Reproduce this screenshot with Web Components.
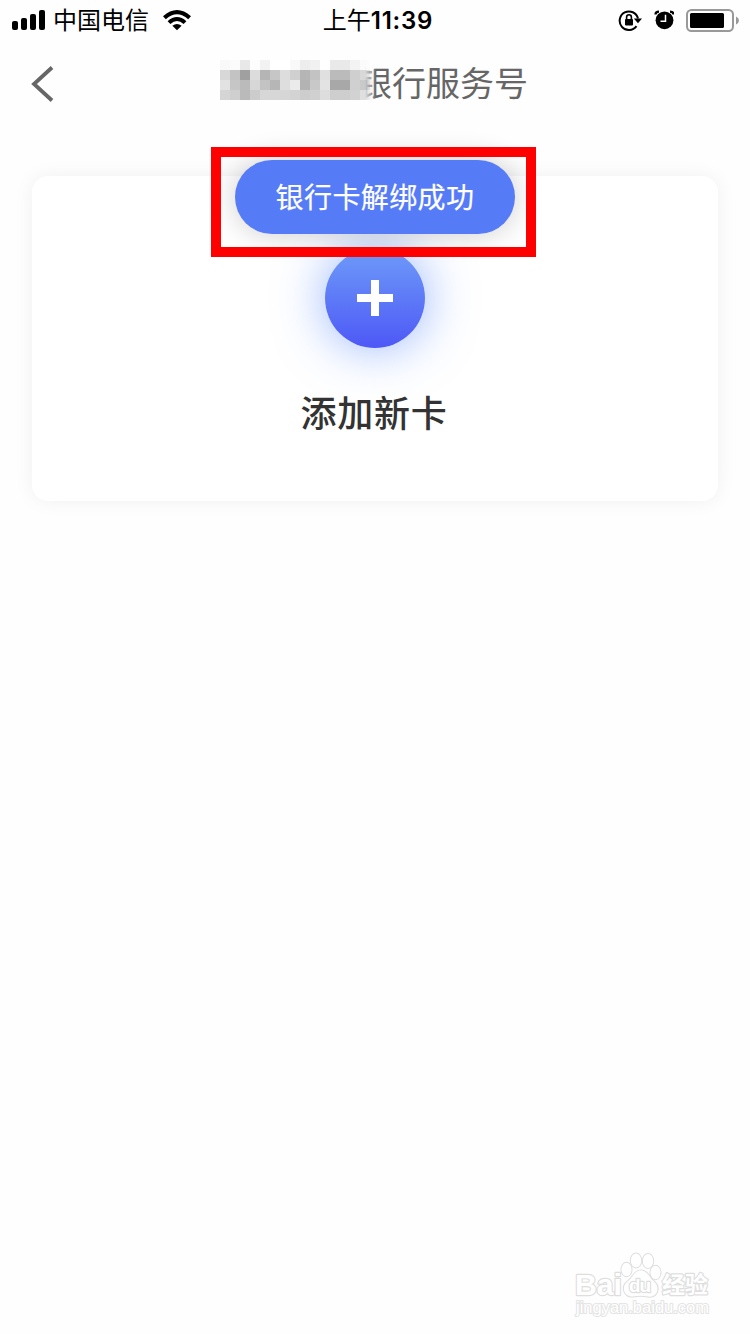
<!DOCTYPE html>
<html lang="zh-CN">
<head>
<meta charset="utf-8">
<title>银行服务号</title>
<style>
  html, body {
    margin: 0;
    height: 100%;
    overflow: hidden;
    background: #fefefe;
    font-family: "Liberation Sans", "Noto Sans CJK SC", sans-serif;
  }
</style>
</head>
<body>
<bank-page></bank-page>

<script>
function define(name, html, setup) {
  const template = document.createElement('template')
  template.innerHTML = html

  window.customElements.define(name, class extends HTMLElement {
    constructor() {
      super()
      const root = this.attachShadow({ mode: 'open' })
      root.appendChild(template.content.cloneNode(true))
      if (setup) setup(root)
    }
  })
}

define('status-bar', `
  <style>
    :host {
      display: grid;
      grid-template-columns: 1fr auto 1fr;
      grid-template-rows: 40px;
      align-items: center;
      height: 40px;
      padding: 0 11px 0 12px;
      color: #000;
      font: 24px/38px "Noto Sans CJK SC", sans-serif;
    }

    .left, .right, .time {
      display: flex;
      align-items: center;
    }

    .right {
      justify-content: flex-end;
    }

    .carrier {
      margin: 0 14px 0 7px;
      padding-bottom: 2px;
    }

    .time {
      margin-left: 5px;
    }

    .am {
      padding-bottom: 2px;
    }

    .digits {
      padding-top: 2px;
      font: 600 24px/38px Inter, sans-serif;
      letter-spacing: 0.8px;
    }

    svg {
      display: block;
      flex: none;
    }

    .lock { margin-right: 12px; }
    .alarm { margin-right: 11px; }
    .battery { margin-right: -11px; }
  </style>

  <div class="left">
    <svg width="34" height="40" viewBox="0 0 34 40">
      <rect x="0" y="21" width="6" height="9" rx="2"/>
      <rect x="9" y="18" width="6" height="12" rx="2"/>
      <rect x="18" y="14" width="6" height="16" rx="2"/>
      <rect x="27" y="10" width="6" height="20" rx="2"/>
    </svg>
    <span class="carrier">中国电信</span>
    <svg width="28" height="40" viewBox="163 0 28 40">
      <path d="M163 16.300Q177 3.700 191 16.300L188.200 19.200Q177 9.200 165.800 19.200Z"/>
      <path d="M167.600 21.200Q177 13 186.400 21.200L183.600 24Q177 18.200 170.400 24Z"/>
      <path d="M172.400 25.800Q177 22 181.600 25.800L177 30.300Z"/>
    </svg>
  </div>
  <div class="time"><span class="am">上午</span><span class="digits">11:39</span></div>
  <div class="right">
    <svg class="lock" width="24" height="40" viewBox="618 0 24 40">
      <path d="M636.500 26.200A9.300 9.300 0 1 1 638 18.500" fill="none" stroke="#000" stroke-width="2"/>
      <path d="M633.800 18.500H642L638 23.300Z"/>
      <rect x="625" y="19" width="8" height="6.500" rx="1"/>
      <path d="M626.600 20V17.200a2.400 2.400 0 0 1 4.800 0V20" fill="none" stroke="#000" stroke-width="1.600"/>
    </svg>
    <svg class="alarm" width="20" height="40" viewBox="654 0 20 40">
      <circle cx="664.500" cy="20.300" r="8.900"/>
      <path d="M655.500 14.500Q655.500 11.700 659 11.700M673.500 14.500Q673.500 11.700 670 11.700" fill="none" stroke="#000" stroke-width="2.300"/>
      <path d="M665.500 14.800V21.200H660.500" fill="none" stroke="#fff" stroke-width="1.500"/>
    </svg>
    <svg class="battery" width="65" height="40" viewBox="685 0 65 40">
      <rect x="687" y="10" width="46" height="21" rx="4.500" fill="none" stroke="#999" stroke-width="2"/>
      <rect x="690" y="13" width="34" height="15" rx="1.500"/>
      <path d="M736 16.500Q739 18 739 20.500T736 24.500Z" fill="#999"/>
    </svg>
  </div>
`)

// rows of grey levels behind which the bank's name is hidden
const MOSAIC = [
  'f9 fb e8 fd f2 ff ff f9 ed f1 ff e9 e9 f3 fb fe',
  'd8 c3 a0 dc b5 c6 dd d0 b5 c3 e0 bb bb cf d8 ee',
  'e2 c6 bb d7 c3 b6 de eb b3 c8 e3 a8 a8 d0 c9 e4',
  'd5 cf ba cc d7 d7 d6 d3 cd d0 dd ce ce d2 df ee'
]

define('pixel-mask', `
  <style>
    :host {
      display: grid;
      grid-template-columns: repeat(16, 10px);
      grid-auto-rows: 10px;
      -webkit-mask-image: linear-gradient(90deg, #000 145px, transparent 156px);
      mask-image: linear-gradient(90deg, #000 145px, transparent 156px);
    }
  </style>
`, (root) => {
  MOSAIC.join(' ').split(' ').forEach((level) => {
    const cell = document.createElement('i')
    cell.style.background = `#${level}${level}${level}`
    root.appendChild(cell)
  })
})

define('nav-bar', `
  <style>
    :host {
      display: grid;
      grid-template-columns: 220px 1fr;
      align-items: center;
      height: 88px;
      color: #666;
    }

    .back {
      display: block;
      margin-left: 30px;
    }

    .title {
      display: flex;
      align-items: center;
      height: 48px;
      margin-top: -4px;
      font: 34px/48px "Noto Sans CJK SC", sans-serif;
    }

    pixel-mask {
      margin: -4px -22px 0 0;
      z-index: 1;
    }
  </style>

  <svg class="back" width="26" height="40" viewBox="0 0 26 40">
    <path d="M22 3.500L4 20L22 36.500" fill="none" stroke="#666" stroke-width="3.800"/>
  </svg>
  <div class="title"><pixel-mask></pixel-mask><slot></slot></div>
`)

define('add-card', `
  <style>
    :host {
      display: flex;
      flex-direction: column;
      align-items: center;
      box-sizing: border-box;
      height: 325px;
      margin: 48px 32px 0;
      padding-top: 72px;
      border-radius: 16px;
      background: #fff;
      box-shadow: 0 0 20px rgba(0, 0, 0, 0.06);
    }

    .plus {
      display: grid;
      place-items: center;
      width: 100px;
      height: 100px;
      border-radius: 50%;
      background: linear-gradient(#6f9cf9, #4d58f6);
      box-shadow: 0 0 50px rgba(82, 134, 250, 0.62);
    }

    .label {
      margin: 37px 2px 0 0;
      color: #333;
      font: 500 36px/52px "Noto Sans CJK SC", sans-serif;
      letter-spacing: 0.7px;
    }
  </style>

  <div class="plus">
    <svg width="36" height="36" viewBox="0 0 36 36">
      <path d="M14 0h8v14h14v8H22v14h-8V22H0v-8h14z" fill="#fff"/>
    </svg>
  </div>
  <div class="label"><slot></slot></div>
`)

define('toast-message', `
  <style>
    :host {
      position: absolute;
      left: 235px;
      top: 160px;
      display: grid;
      place-items: center;
      box-sizing: border-box;
      width: 280px;
      height: 74px;
      padding-bottom: 2px;
      border-radius: 37px;
      background: #567bf7;
      box-shadow: 0 0 30px rgba(0, 0, 0, 0.2);
      color: #fff;
      font: 28px/40px "Noto Sans CJK SC", sans-serif;
      letter-spacing: 0.4px;
      -webkit-text-stroke: 0.2px #fff;
    }
  </style>
  <span><slot></slot></span>
`)

define('highlight-box', `
  <style>
    :host {
      position: absolute;
      left: 211px;
      top: 147px;
      box-sizing: border-box;
      width: 325px;
      height: 110px;
      border: 10px solid #f00;
    }
  </style>
`)

define('baidu-mark', `
  <style>
    :host {
      position: absolute;
      left: 570px;
      top: 1248px;
      width: 150px;
      height: 76px;
    }

    svg {
      display: block;
    }

    text, .paw {
      fill: #fff;
      stroke: #dedede;
      stroke-width: 2.4px;
      stroke-linejoin: round;
      paint-order: stroke;
    }

    .paw {
      stroke-width: 2px;
    }

    .url {
      stroke: #e4e4e4;
      stroke-width: 2px;
    }
  </style>

  <svg width="150" height="76" viewBox="570 1248 150 76">
    <text x="575" y="1295" font-family="Liberation Sans" font-weight="700" font-size="30" textLength="47" lengthAdjust="spacingAndGlyphs">Bai</text>
    <g class="paw">
      <ellipse cx="626.500" cy="1269.500" rx="5" ry="6.700"/>
      <ellipse cx="636" cy="1260.500" rx="5.200" ry="7"/>
      <ellipse cx="648" cy="1261" rx="5.200" ry="7"/>
      <ellipse cx="655.500" cy="1272.500" rx="5" ry="6.700"/>
      <path d="M640.500 1270.500C634 1270.500 633 1278 627 1282C621 1287 624 1297 633 1296.500C638 1295.500 643 1295.500 648 1296.500C658 1298 660 1287 654.500 1282C649 1278 648 1270.500 640.500 1270.500Z"/>
    </g>
    <text x="629" y="1292" font-family="Liberation Sans" font-weight="700" font-size="19" textLength="22">du</text>
    <text x="662" y="1293" font-family="Noto Sans CJK SC" font-weight="700" font-size="23">经验</text>
    <text class="url" x="576" y="1313" font-family="Liberation Sans" font-size="16" textLength="133" lengthAdjust="spacingAndGlyphs">jingyan.baidu.com</text>
  </svg>
`)

define('bank-page', `
  <style>
    :host {
      display: block;
      position: relative;
      width: 750px;
      height: 1334px;
      overflow: hidden;
    }
  </style>

  <status-bar></status-bar>
  <nav-bar>银行服务号</nav-bar>
  <add-card>添加新卡</add-card>
  <toast-message>银行卡解绑成功</toast-message>
  <highlight-box></highlight-box>
  <baidu-mark></baidu-mark>
`)
</script>
</body>
</html>
